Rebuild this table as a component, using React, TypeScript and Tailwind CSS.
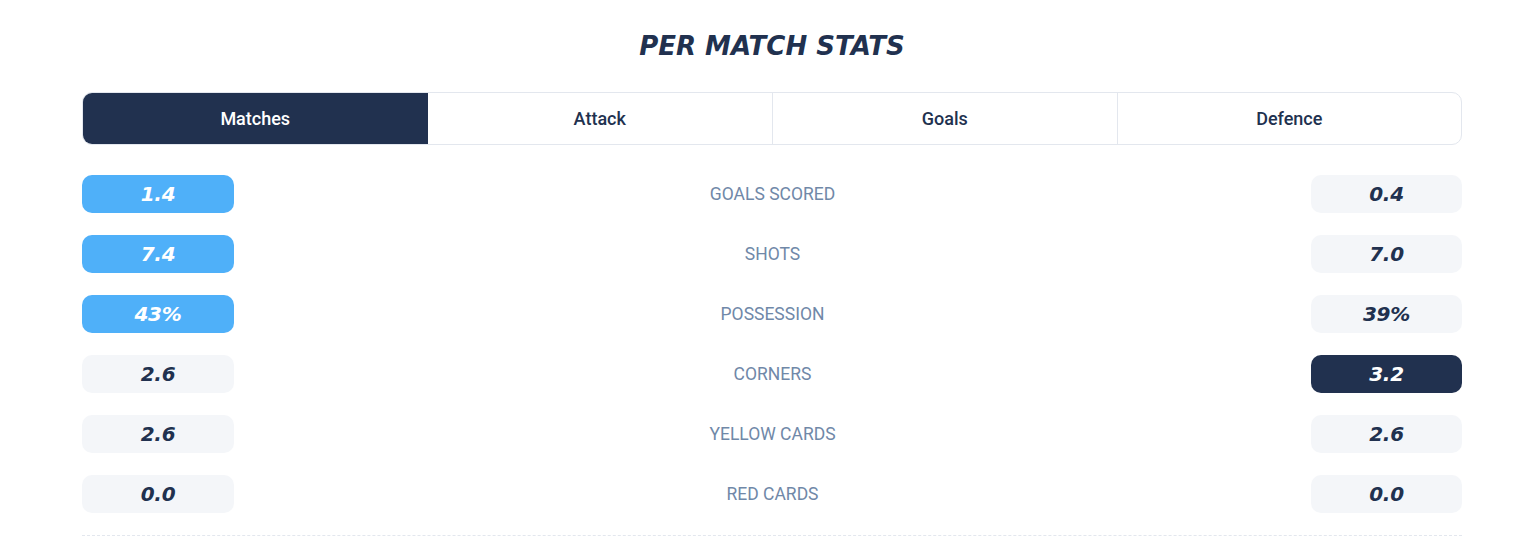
import React from "react";

const tabs = ["Matches", "Attack", "Goals", "Defence"];

type Row = { label: string; left: string; right: string; lv: "blue" | "gray" | "dark"; rv: "blue" | "gray" | "dark" };

const rows: Row[] = [
  { label: "GOALS SCORED", left: "1.4", right: "0.4", lv: "blue", rv: "gray" },
  { label: "SHOTS", left: "7.4", right: "7.0", lv: "blue", rv: "gray" },
  { label: "POSSESSION", left: "43%", right: "39%", lv: "blue", rv: "gray" },
  { label: "CORNERS", left: "2.6", right: "3.2", lv: "gray", rv: "dark" },
  { label: "YELLOW CARDS", left: "2.6", right: "2.6", lv: "gray", rv: "gray" },
  { label: "RED CARDS", left: "0.0", right: "0.0", lv: "gray", rv: "gray" },
];

const pillCls: Record<string, string> = {
  blue: "bg-[#4fb0f9] text-white",
  gray: "bg-[#f4f6f9] text-[#21314f]",
  dark: "bg-[#21314f] text-white",
};

function Pill({ v, kind, right }: { v: string; kind: string; right?: boolean }) {
  return (
    <div
      className={`${right ? "w-[151px]" : "w-[152px]"} h-[38px] rounded-[10px] flex items-center justify-center italic font-bold text-[20px] tracking-[-0.3px] ${pillCls[kind]}`}
      style={{ fontFamily: '"DejaVu Sans", sans-serif' }}
    >
      {v}
    </div>
  );
}

export default function App() {
  return (
    <div className="w-[1540px] h-[542px] bg-white overflow-hidden" style={{ fontFamily: "Roboto, sans-serif" }}>
      <div className="w-[1380px] ml-[82px]">
        <h1
          className="pt-[27px] h-[92px] text-center italic font-bold text-[26px] text-[#21314f]"
          style={{ fontFamily: '"DejaVu Sans", sans-serif' }}
        >
          PER MATCH STATS
        </h1>
        <div className="grid grid-cols-4 h-[53px] border border-[#e3e7ee] rounded-[10px] overflow-hidden">
          {tabs.map((t, i) => (
            <div
              key={t}
              className={`flex items-center justify-center text-[18px] font-medium ${
                i === 0 ? "bg-[#21314f] text-white" : "text-[#21314f]"
              } ${i > 1 ? "border-l border-[#e3e7ee]" : ""}`}
            >
              {t}
            </div>
          ))}
        </div>
        <div className="mt-[30px] flex flex-col gap-[22px]">
          {rows.map((r) => (
            <div key={r.label} className="flex items-center justify-between">
              <Pill v={r.left} kind={r.lv} />
              <div className="text-[17.5px] text-[#7088a8]">{r.label}</div>
              <Pill v={r.right} kind={r.rv} right />
            </div>
          ))}
        </div>
        <div className="mt-[22px] border-t border-dashed border-[#e3e7ee]" />
      </div>
    </div>
  );
}
